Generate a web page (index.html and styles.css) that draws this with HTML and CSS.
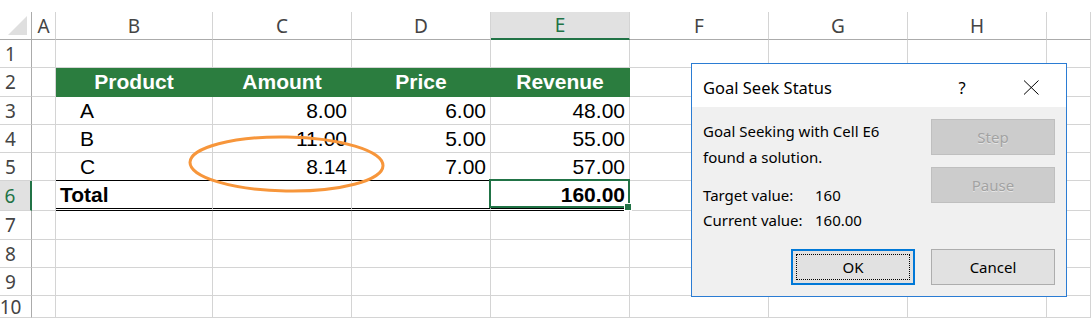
FILE: index.html
```html
<!DOCTYPE html>
<html lang="en">
<head>
    <meta charset="UTF-8">
    <title>Goal Seek Status</title>
    <link rel="stylesheet" href="styles.css">
</head>
<body>
    <div class="app">
        <div class="sheet">
            <!-- column headers -->
            <div class="cell ch corner"></div>
            <div class="cell ch">A</div>
            <div class="cell ch">B</div>
            <div class="cell ch">C</div>
            <div class="cell ch">D</div>
            <div class="cell ch ch-active">E</div>
            <div class="cell ch">F</div>
            <div class="cell ch">G</div>
            <div class="cell ch">H</div>
            <div class="cell ch"></div>

            <!-- row 1 -->
            <div class="cell rh">1</div>
            <div class="cell"></div><div class="cell"></div><div class="cell"></div><div class="cell"></div>
            <div class="cell"></div><div class="cell"></div><div class="cell"></div><div class="cell"></div><div class="cell"></div>

            <!-- row 2 -->
            <div class="cell rh">2</div>
            <div class="cell"></div>
            <div class="cell grn">Product</div>
            <div class="cell grn">Amount</div>
            <div class="cell grn">Price</div>
            <div class="cell grn">Revenue</div>
            <div class="cell"></div><div class="cell"></div><div class="cell"></div><div class="cell"></div>

            <!-- row 3 -->
            <div class="cell rh">3</div>
            <div class="cell"></div>
            <div class="cell lbl">A</div>
            <div class="cell num">8.00</div>
            <div class="cell num">6.00</div>
            <div class="cell num">48.00</div>
            <div class="cell"></div><div class="cell"></div><div class="cell"></div><div class="cell"></div>

            <!-- row 4 -->
            <div class="cell rh">4</div>
            <div class="cell"></div>
            <div class="cell lbl">B</div>
            <div class="cell num">11.00</div>
            <div class="cell num">5.00</div>
            <div class="cell num">55.00</div>
            <div class="cell"></div><div class="cell"></div><div class="cell"></div><div class="cell"></div>

            <!-- row 5 -->
            <div class="cell rh">5</div>
            <div class="cell"></div>
            <div class="cell lbl rule">C</div>
            <div class="cell num rule">8.14</div>
            <div class="cell num rule">7.00</div>
            <div class="cell num rule">57.00</div>
            <div class="cell"></div><div class="cell"></div><div class="cell"></div><div class="cell"></div>

            <!-- row 6 -->
            <div class="cell rh rh-active">6</div>
            <div class="cell"></div>
            <div class="cell bold dbl">Total</div>
            <div class="cell dbl"></div>
            <div class="cell dbl"></div>
            <div class="cell num bold dbl sel">160.00</div>
            <div class="cell"></div><div class="cell"></div><div class="cell"></div><div class="cell"></div>

            <!-- rows 7-10 -->
            <div class="cell rh">7</div>
            <div class="cell"></div><div class="cell"></div><div class="cell"></div><div class="cell"></div>
            <div class="cell"></div><div class="cell"></div><div class="cell"></div><div class="cell"></div><div class="cell"></div>

            <div class="cell rh">8</div>
            <div class="cell"></div><div class="cell"></div><div class="cell"></div><div class="cell"></div>
            <div class="cell"></div><div class="cell"></div><div class="cell"></div><div class="cell"></div><div class="cell"></div>

            <div class="cell rh">9</div>
            <div class="cell"></div><div class="cell"></div><div class="cell"></div><div class="cell"></div>
            <div class="cell"></div><div class="cell"></div><div class="cell"></div><div class="cell"></div><div class="cell"></div>

            <div class="cell rh">10</div>
            <div class="cell"></div><div class="cell"></div><div class="cell"></div><div class="cell"></div>
            <div class="cell"></div><div class="cell"></div><div class="cell"></div><div class="cell"></div><div class="cell"></div>
        </div>

        <!-- highlight around the changed cell -->
        <svg class="mark" width="1091" height="318" viewBox="0 0 1091 318">
            <ellipse cx="286.5" cy="164" rx="96.5" ry="27" fill="none" stroke="#f7963b" stroke-width="3" transform="rotate(1 286.5 164)"/>
        </svg>

        <div class="dialog">
            <div class="dlg-title">
                <span class="dlg-caption">Goal Seek Status</span>
                <span class="dlg-help">?</span>
                <span class="dlg-close">
                    <svg width="16" height="15" viewBox="0 0 16 15">
                        <path d="M1 0.5 L15.5 14.5 M15.5 0.5 L1 14.5" stroke="#000" stroke-width="1" fill="none"/>
                    </svg>
                </span>
            </div>
            <div class="dlg-body">
                <div class="dlg-main">
                    <div class="dlg-info">
                        <p class="dlg-msg">Goal Seeking with Cell E6<br>found a solution.</p>
                        <div class="dlg-values">
                            <div class="dlg-row"><span class="dlg-label">Target value:</span><span>160</span></div>
                            <div class="dlg-row"><span class="dlg-label">Current value:</span><span>160.00</span></div>
                        </div>
                    </div>
                    <div class="dlg-side">
                        <button class="btn btn-disabled">Step</button>
                        <button class="btn btn-disabled">Pause</button>
                    </div>
                </div>
                <div class="dlg-actions">
                    <button class="btn btn-default"><span class="focus">OK</span></button>
                    <button class="btn">Cancel</button>
                </div>
            </div>
        </div>
    </div>
</body>
</html>
```

FILE: styles.css
```css
body {
    margin: 0;
    background-color: #ffffff;
    font-family: 'Liberation Sans', Arial, sans-serif;
    overflow: hidden;
}

.app {
    position: relative;
    width: 1091px;
    height: 318px;
    padding-top: 12px;
    box-sizing: border-box;
    overflow: hidden;
}

.sheet {
    display: grid;
    grid-template-columns: 32px 24px 157px 139px 139px 139px 139px 139px 139px 1fr;
    grid-template-rows: 28px 28px 29px 28px 28px 28px 30px 29px 28px 28px 22px;
}

.cell {
    box-sizing: border-box;
    border-right: 1px solid #d4d4d4;
    border-bottom: 1px solid #d4d4d4;
    display: flex;
    align-items: center;
    padding: 0 4px;
    font-size: 21px;
    color: #000;
    white-space: nowrap;
}

/* headers */
.ch {
    justify-content: center;
    font-family: 'Noto Sans', sans-serif;
    font-size: 19px;
    color: #444;
    border-bottom-color: #ababab;
}

.corner {
    position: relative;
    border-right-color: #ababab;
}

.corner::after {
    content: '';
    position: absolute;
    left: 8px;
    top: 4px;
    width: 19px;
    height: 19px;
    background-color: #dfdfdf;
    clip-path: polygon(100% 0, 100% 100%, 0 100%);
}

.ch-active {
    background-color: #e1e1e1;
    color: #217346;
    border-bottom: 2px solid #217346;
}

.rh {
    justify-content: center;
    padding: 0 10px 0 0;
    font-family: 'Noto Sans', sans-serif;
    font-size: 19px;
    color: #444;
    border-right-color: #ababab;
}

.rh-active {
    background-color: #e1e1e1;
    color: #217346;
    border-right: 2px solid #217346;
}

/* table body */
.grn {
    justify-content: center;
    background-color: #2b7d3f;
    border-color: #2b7d3f;
    color: #ffffff;
    font-weight: bold;
}

.lbl {
    padding-left: 24px;
}

.num {
    justify-content: flex-end;
}

.bold {
    font-weight: bold;
}

.rule {
    border-bottom-color: #000;
}

.dbl {
    border-bottom: 3px double #000;
}

.sel {
    position: relative;
}

.sel::after {
    content: '';
    position: absolute;
    left: -2px;
    top: -2px;
    right: -1px;
    bottom: 0;
    border: 2px solid #217346;
}

.sel::before {
    content: '';
    position: absolute;
    right: -3px;
    bottom: -3px;
    width: 6px;
    height: 6px;
    background-color: #217346;
    border: 1px solid #ffffff;
    z-index: 1;
}

.mark {
    position: absolute;
    left: 0;
    top: 0;
    pointer-events: none;
}

/* dialog */
.dialog {
    position: absolute;
    left: 691px;
    top: 63px;
    width: 376px;
    height: 234px;
    box-sizing: border-box;
    border: 1px solid #2b7cd3;
    background-color: #f0f0f0;
    display: flex;
    flex-direction: column;
    font-family: 'Segoe UI', 'Noto Sans', sans-serif;
    font-size: 15px;
    color: #000;
}

.dlg-title {
    height: 43px;
    flex-shrink: 0;
    box-sizing: border-box;
    padding: 3px 20px 0 11px;
    background-color: #ffffff;
    display: flex;
    align-items: center;
    font-size: 16.5px;
}

.dlg-caption {
    flex: 1;
}

.dlg-help {
    width: 20px;
    text-align: center;
}

.dlg-close {
    width: 30px;
    margin-left: 44px;
    display: flex;
    justify-content: center;
}

.dlg-body {
    flex: 1;
    padding: 12px 11px 11px 11px;
    display: flex;
    flex-direction: column;
}

.dlg-main {
    display: flex;
    justify-content: space-between;
}

.dlg-msg {
    margin: -1px 0 0 0;
    line-height: 26px;
}

.dlg-values {
    margin-top: 13px;
}

.dlg-row {
    display: flex;
    line-height: 25px;
}

.dlg-label {
    width: 112px;
}

.dlg-side {
    display: flex;
    flex-direction: column;
    gap: 12px;
}

.dlg-actions {
    margin-top: auto;
    display: flex;
    justify-content: flex-end;
    gap: 16px;
}

.btn {
    box-sizing: border-box;
    width: 124px;
    height: 36px;
    padding: 0;
    background-color: #e1e1e1;
    border: 1px solid #adadad;
    font-family: inherit;
    font-size: 15px;
    color: #000;
}

.btn-disabled {
    background-color: #cccccc;
    border-color: #bfbfbf;
    color: #a2a2a2;
    text-shadow: 0 1px 0 rgba(255, 255, 255, 0.5);
}

.btn-default {
    border: 2px solid #0078d7;
    padding: 3px;
}

.focus {
    display: flex;
    align-items: center;
    justify-content: center;
    height: 100%;
    box-sizing: border-box;
    border: 1px dotted #000;
}
```
